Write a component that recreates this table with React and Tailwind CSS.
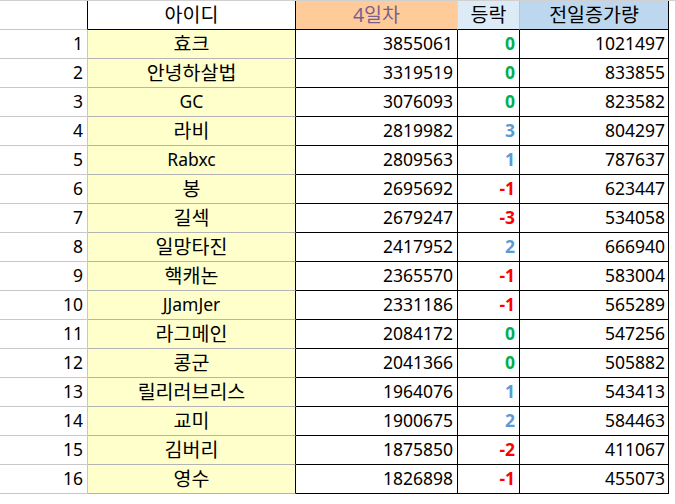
const rows = [
  [1, "효크", 3855061, 0, 1021497],
  [2, "안녕하살법", 3319519, 0, 833855],
  [3, "GC", 3076093, 0, 823582],
  [4, "라비", 2819982, 3, 804297],
  [5, "Rabxc", 2809563, 1, 787637],
  [6, "봉", 2695692, -1, 623447],
  [7, "길섹", 2679247, -3, 534058],
  [8, "일망타진", 2417952, 2, 666940],
  [9, "핵캐논", 2365570, -1, 583004],
  [10, "JJamJer", 2331186, -1, 565289],
  [11, "라그메인", 2084172, 0, 547256],
  [12, "콩군", 2041366, 0, 505882],
  [13, "릴리러브리스", 1964076, 1, 543413],
  [14, "교미", 1900675, 2, 584463],
  [15, "김버리", 1875850, -2, 411067],
  [16, "영수", 1826898, -1, 455073],
];

function changeColor(n) {
  if (n > 0) return "text-[#5b9bd5]";
  if (n < 0) return "text-[#ff0000]";
  return "text-[#00b050]";
}

// hangul renders smaller in the fallback font, bump it
const isHangul = (s) => /[\uac00-\ud7a3]/.test(s);

export default function App() {
  return (
    <div className="w-[675px] h-[504px] bg-white text-black text-[17.5px] leading-none font-['Noto_Sans','Noto_Sans_CJK_KR',sans-serif]">
      <div className="flex h-[30px] border-t border-[#d0d0d0] text-[19.5px]">
        <div className="w-[88px] shrink-0 border-r border-b border-r-black border-b-[#c8c8c8]" />
        <div className="w-[208px] shrink-0 flex items-center justify-center border-r border-b border-black">
          아이디
        </div>
        <div className="w-[162px] shrink-0 flex items-center justify-center bg-[#ffcc99] text-[#7a5f8f] border-r border-b border-r-[#d8d8d8] border-b-black">
          4일차
        </div>
        <div className="w-[62px] shrink-0 flex items-center justify-center bg-[#ddebf7] border-r border-b border-r-[#b8c4d0] border-b-black">
          등락
        </div>
        <div className="w-[149px] shrink-0 flex items-center justify-center bg-[#bdd7ee] border-r border-b border-black">
          전일증가량
        </div>
      </div>
      {rows.map(([no, id, total, diff, gain]) => (
        <div key={no} className="flex h-[29px]">
          <div className="w-[88px] shrink-0 flex items-center justify-end pr-[4px] border-r border-b border-[#c8c8c8]">
            {no}
          </div>
          <div
            className={`w-[208px] shrink-0 flex items-center justify-center bg-[#ffffcc] border-r border-b border-r-black border-b-[#b4b4b4] ${
              isHangul(id) ? "text-[19.5px]" : "text-[17.5px]"
            }`}
          >
            {id}
          </div>
          <div className="w-[162px] shrink-0 flex items-center justify-end pr-[4px] border-r border-b border-black">
            {total}
          </div>
          <div className={`w-[62px] shrink-0 flex items-center justify-end pr-[4px] font-bold border-r border-b border-black ${changeColor(diff)}`}>
            {diff}
          </div>
          <div className="w-[149px] shrink-0 flex items-center justify-end pr-[3px] border-r border-b border-black">
            {gain}
          </div>
        </div>
      ))}
    </div>
  );
}
